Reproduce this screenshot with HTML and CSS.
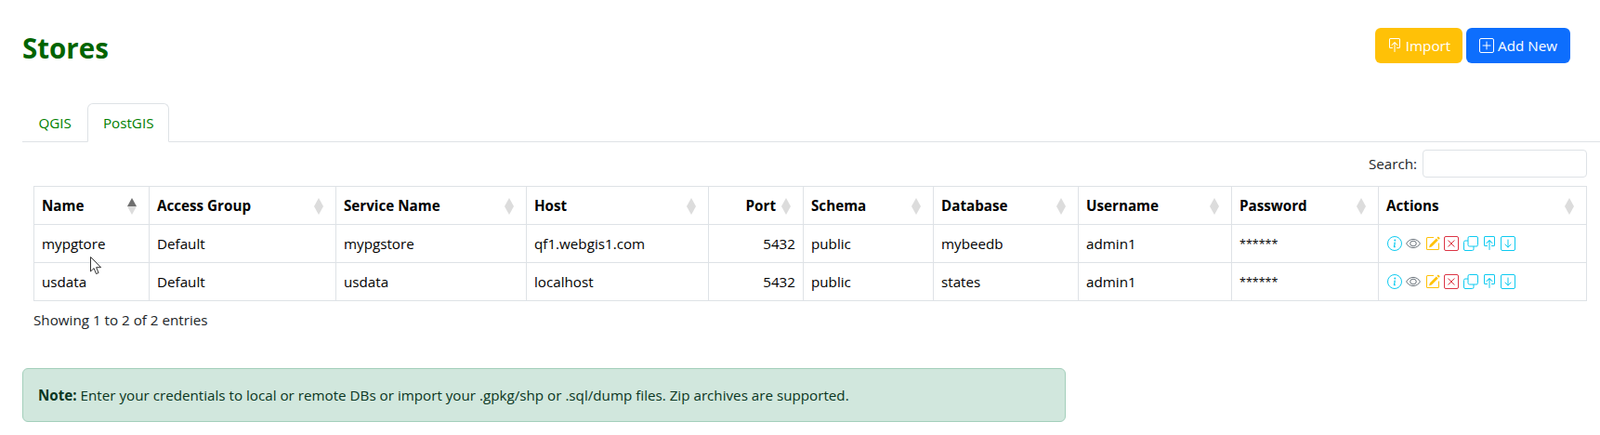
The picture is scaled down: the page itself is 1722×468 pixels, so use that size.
FILE: index.html
```html
<!DOCTYPE html>
<html>
  <head>
    <title>Stores</title>
    <link rel="stylesheet" href="styles.css">
  </head>
<body>
  <svg class="sprites" width="0" height="0">
    <symbol id="i-info" viewBox="0 0 16 16">
      <circle cx="8" cy="8" r="7.5" fill="none" stroke="currentColor"/>
      <path d="M8.9 6.6 7 6.9l-.1.4.4.1c.2 0 .3.1.3.3l-.7 3.3c-.2.9.1 1.3.8 1.3.6 0 1.2-.3 1.5-.6l.1-.4c-.2.2-.5.3-.7.3-.3 0-.4-.2-.3-.5z" fill="currentColor"/>
      <circle cx="8.3" cy="4.4" r="1" fill="currentColor"/>
    </symbol>
    <symbol id="i-eye" viewBox="0 0 16 16">
      <path d="M.6 8C2.2 5.2 4.9 3.4 8 3.4s5.800 1.800 7.400 4.600C13.800 10.800 11.100 12.600 8 12.600S2.200 10.800.6 8z" fill="none" stroke="currentColor"/>
      <ellipse cx="8" cy="8" rx="3.300" ry="2.800" fill="none" stroke="currentColor"/>
    </symbol>
    <symbol id="i-edit" viewBox="0 0 16 16">
      <path d="M15.500 2.100a.5.5 0 0 1 0 .7l-1 1-2-2 1-1a.5.5 0 0 1 .7 0l1.300 1.300zM13.800 4.500l-2-2L5 9.300a.5.5 0 0 0-.1.2l-.8 2.400c-.1.200.1.400.3.300l2.400-.8a.5.5 0 0 0 .2-.1l6.800-6.800z" fill="currentColor"/>
      <path d="M1 13.500A1.500 1.500 0 0 0 2.500 15h11a1.500 1.500 0 0 0 1.500-1.500v-6h-1v6a.5.5 0 0 1-.5.5h-11a.5.5 0 0 1-.5-.5v-11a.5.5 0 0 1 .5-.5H9V1H2.500A1.500 1.500 0 0 0 1 2.500v11z" fill="currentColor"/>
    </symbol>
    <symbol id="i-del" viewBox="0 0 16 16">
      <rect x=".5" y=".5" width="15" height="15" rx="1.500" fill="none" stroke="currentColor"/>
      <path d="M4.500 4.500l7 7m0-7l-7 7" fill="none" stroke="currentColor"/>
    </symbol>
    <symbol id="i-copy" viewBox="0 0 16 16">
      <rect x="5" y=".5" width="10.500" height="10.500" rx="1.500" fill="none" stroke="currentColor"/>
      <path d="M5 5H2a1.500 1.500 0 0 0-1.500 1.500v7.500A1.500 1.500 0 0 0 2 15.500h7.500a1.500 1.500 0 0 0 1.500-1.500v-3" fill="none" stroke="currentColor"/>
    </symbol>
    <symbol id="i-import" viewBox="0 0 16 16">
      <path d="M3.500 10a.5.5 0 0 1-.5-.5v-8a.5.5 0 0 1 .5-.5h9a.5.5 0 0 1 .5.5v8a.5.5 0 0 1-.5.5h-2a.5.5 0 0 0 0 1h2A1.500 1.500 0 0 0 14 9.500v-8A1.500 1.500 0 0 0 12.500 0h-9A1.500 1.500 0 0 0 2 1.500v8A1.500 1.500 0 0 0 3.500 11h2a.5.5 0 0 0 0-1h-2z" fill="currentColor"/>
      <path d="M7.646 4.146a.5.5 0 0 1 .708 0l3 3a.5.5 0 0 1-.708.708L8.500 5.707V14.500a.5.5 0 0 1-1 0V5.707L5.354 7.854a.5.5 0 1 1-.708-.708l3-3z" fill="currentColor"/>
    </symbol>
    <symbol id="i-down" viewBox="0 0 16 16">
      <rect x=".5" y=".5" width="15" height="15" rx="1.500" fill="none" stroke="currentColor"/>
      <path d="M8 4v8M5 9l3 3 3-3" fill="none" stroke="currentColor" stroke-linecap="round" stroke-linejoin="round"/>
    </symbol>
    <symbol id="i-plus" viewBox="0 0 16 16">
      <rect x=".5" y=".5" width="15" height="15" rx="1.500" fill="none" stroke="currentColor"/>
      <path d="M8 4v8M4 8h8" fill="none" stroke="currentColor" stroke-linecap="round"/>
    </symbol>
  </svg>

  <main>
    <header class="page-head">
      <h1>Stores</h1>
      <div class="page-actions">
        <button class="btn btn-import"><svg class="btn-icon"><use href="#i-import"/></svg> Import</button>
        <button class="btn btn-add"><svg class="btn-icon"><use href="#i-plus"/></svg> Add New</button>
      </div>
    </header>

    <ul class="tabs">
      <li class="tab">QGIS</li>
      <li class="tab active">PostGIS</li>
    </ul>

    <section class="store-list">
      <div class="search-row">
        <label>Search:</label>
        <input type="text">
      </div>

      <table class="stores">
        <colgroup>
          <col class="c-name"><col class="c-group"><col class="c-service"><col class="c-host"><col class="c-port">
          <col class="c-schema"><col class="c-db"><col class="c-user"><col class="c-pass"><col class="c-actions">
        </colgroup>
        <thead>
          <tr>
            <th class="sorted">Name</th>
            <th>Access Group</th>
            <th>Service Name</th>
            <th>Host</th>
            <th class="num">Port</th>
            <th>Schema</th>
            <th>Database</th>
            <th>Username</th>
            <th>Password</th>
            <th>Actions</th>
          </tr>
        </thead>
        <tbody>
          <tr>
            <td>mypgtore</td>
            <td>Default</td>
            <td>mypgstore</td>
            <td>qf1.webgis1.com</td>
            <td class="num">5432</td>
            <td>public</td>
            <td>mybeedb</td>
            <td>admin1</td>
            <td class="secret">******</td>
            <td>
              <div class="row-actions">
                <svg class="ic cyan"><use href="#i-info"/></svg>
                <svg class="ic grey"><use href="#i-eye"/></svg>
                <svg class="ic yellow"><use href="#i-edit"/></svg>
                <svg class="ic red"><use href="#i-del"/></svg>
                <svg class="ic cyan"><use href="#i-copy"/></svg>
                <svg class="ic cyan"><use href="#i-import"/></svg>
                <svg class="ic cyan"><use href="#i-down"/></svg>
              </div>
            </td>
          </tr>
          <tr>
            <td>usdata</td>
            <td>Default</td>
            <td>usdata</td>
            <td>localhost</td>
            <td class="num">5432</td>
            <td>public</td>
            <td>states</td>
            <td>admin1</td>
            <td class="secret">******</td>
            <td>
              <div class="row-actions">
                <svg class="ic cyan"><use href="#i-info"/></svg>
                <svg class="ic grey"><use href="#i-eye"/></svg>
                <svg class="ic yellow"><use href="#i-edit"/></svg>
                <svg class="ic red"><use href="#i-del"/></svg>
                <svg class="ic cyan"><use href="#i-copy"/></svg>
                <svg class="ic cyan"><use href="#i-import"/></svg>
                <svg class="ic cyan"><use href="#i-down"/></svg>
              </div>
            </td>
          </tr>
        </tbody>
      </table>

      <div class="table-info">Showing 1 to 2 of 2 entries</div>
    </section>

    <div class="note">
      <strong>Note:</strong> Enter your credentials to local or remote DBs or import your .gpkg/shp or .sql/dump files. Zip archives are supported.
    </div>
  </main>

  <svg class="cursor" width="13" height="20" viewBox="0 0 13 20">
    <path d="M.5.5v15.500l3.600-3.400 2.400 6 2.600-1.100-2.500-5.800h5z" fill="#fff" stroke="#333"/>
  </svg>
</body>
</html>
```

FILE: styles.css
```css
* {
  box-sizing: border-box;
}

body {
  margin: 0;
  background: white;
  color: #212529;
  font-family: "Open Sans", "Noto Sans", sans-serif;
  font-size: 15.2px;
}

.sprites {
  position: absolute;
}

main {
  padding-left: 24px;
}

.page-head {
  display: flex;
  justify-content: space-between;
  align-items: flex-start;
  height: 111px;
  padding: 30px 32px 0 0;
}

.page-head h1 {
  margin: 3px 0 0;
  color: #006400;
  font-size: 29.5px;
  line-height: 38px;
  font-weight: 700;
}

.page-actions {
  display: flex;
  gap: 4px;
}

.btn {
  display: flex;
  align-items: center;
  justify-content: center;
  gap: 4px;
  height: 38px;
  border: 0;
  border-radius: 6px;
  color: white;
  font-family: inherit;
  font-size: 15.2px;
}

.btn-import {
  width: 94px;
  background: #ffc107;
}

.btn-add {
  width: 112px;
  background: #0d6efd;
}

.btn-icon {
  width: 16px;
  height: 16px;
}

.tabs {
  display: flex;
  margin: 0;
  padding: 0;
  list-style: none;
  height: 42px;
  border-bottom: 1px solid #dee2e6;
}

.tab {
  height: 42px;
  padding: 0 16.500px;
  border: 1px solid transparent;
  border-radius: 6px 6px 0 0;
  color: #008000;
  line-height: 40px;
}

.tab.active {
  padding: 0 15.500px;
  border-color: #dee2e6 #dee2e6 white;
  background: white;
}

.store-list {
  margin: 0 14px 0 12px;
}

.search-row {
  display: flex;
  justify-content: flex-end;
  align-items: center;
  gap: 6px;
  padding: 8px 0 9px;
}

.search-row input {
  width: 177px;
  height: 30px;
  border: 1px solid #dee2e6;
  border-radius: 4px;
}

.stores {
  width: 100%;
  table-layout: fixed;
  border-collapse: collapse;
}

.c-name { width: 124px; }
.c-group { width: 201px; }
.c-service { width: 205px; }
.c-host { width: 196px; }
.c-port { width: 102px; }
.c-schema { width: 140px; }
.c-db { width: 156px; }
.c-user { width: 165px; }
.c-pass { width: 158px; }

.stores th,
.stores td {
  height: 41px;
  padding: 0 8px;
  border: 1px solid #dee2e6;
  text-align: left;
  color: black;
  white-space: nowrap;
}

.stores th {
  position: relative;
  padding-right: 26px;
  font-weight: 700;
}

.stores th::before,
.stores th::after {
  content: "";
  position: absolute;
  right: 13px;
  border-left: 5.500px solid transparent;
  border-right: 5.500px solid transparent;
}

.stores th::before {
  top: 12px;
  border-bottom: 9px solid #dcdcdc;
}

.stores th::after {
  top: 21px;
  border-top: 9px solid #dcdcdc;
}

.stores th.sorted::before {
  border-bottom-color: #6f6f6f;
}

.stores .num {
  text-align: right;
}

.stores th.num {
  padding-right: 29px;
}

.stores .secret {
  font-size: 12.500px;
}

.row-actions {
  display: flex;
  gap: 4.400px;
  margin-left: 1px;
}

.ic {
  width: 16px;
  height: 16px;
}

.cyan { color: #0dcaf0; }
.grey { color: #6c757d; }
.yellow { color: #ffc107; }
.red { color: #dc3545; }

.table-info {
  padding-top: 9px;
  line-height: 22px;
}

.note {
  width: 1123px;
  height: 58px;
  margin-top: 41px;
  padding: 0 16px;
  border: 1px solid #a3cfbb;
  border-radius: 6px;
  background: #d1e7dd;
  color: #0a3622;
  line-height: 56px;
}

.cursor {
  position: absolute;
  left: 97px;
  top: 276px;
}
```
